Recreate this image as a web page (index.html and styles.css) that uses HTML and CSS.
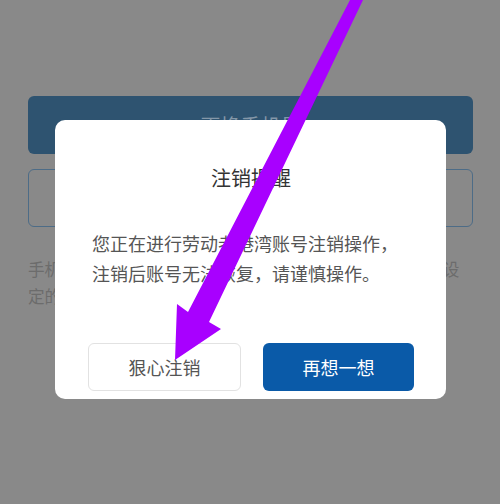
FILE: index.html
```html
<!DOCTYPE html>
<html lang="zh-CN">
<head>
  <meta charset="UTF-8">
  <meta name="viewport" content="width=device-width, initial-scale=1.0">
  <title>注销提醒</title>
  <link rel="stylesheet" href="styles.css">
</head>
<body>
  <div class="page">
    <button class="btn-primary">更换手机号</button>
    <button class="btn-outline">注销账号</button>
    <p class="tip">手机号更换后，原手机号将不能再用于登录，请确认您已设<br>定的新手机号可以正常接收验证码。</p>
  </div>

  <div class="mask">
    <div class="dialog">
      <h2 class="dialog-title">注销提醒</h2>
      <p class="dialog-text">您正在进行劳动者港湾账号注销操作，<br>注销后账号无法恢复，请谨慎操作。</p>
      <div class="dialog-actions">
        <button class="dlg-btn cancel">狠心注销</button>
        <button class="dlg-btn confirm">再想一想</button>
      </div>
    </div>
  </div>

  <svg class="arrow" width="500" height="504" viewBox="0 0 500 504">
    <polygon points="350,0 363,0 209,322 221,329 175,360 177,304 188,312" fill="#a800ff"/>
  </svg>
</body>
</html>
```

FILE: styles.css
```css
*{margin:0;padding:0;box-sizing:border-box;font-family:"Noto Sans CJK SC","Noto Sans",sans-serif;}
body{width:500px;height:504px;background:#898989;overflow:hidden;}
.page{padding:96px 27px 0 28px;display:flex;flex-direction:column;}
.btn-primary{height:58px;border:none;border-radius:6px;background:#2e5370;color:#8497a8;font-size:20px;}
.btn-outline{height:58px;margin-top:15px;border:1.5px solid #4d6c87;border-radius:6px;background:#898989;color:#4d6c87;font-size:18px;}
.tip{margin-top:29px;color:#6c6c6c;font-size:16.6px;line-height:27px;white-space:nowrap;}

.mask{position:fixed;inset:0;padding-top:120px;}
.dialog{width:391px;margin-left:55px;padding:44px 32px 8px 33px;background:#fff;border-radius:10px;}
.dialog-title{text-align:center;color:#333;font-size:20px;font-weight:normal;line-height:28px;}
.dialog-text{margin-top:36px;padding-left:4px;color:#555;font-size:18px;line-height:30px;}
.dialog-actions{display:flex;gap:22px;margin-top:55px;}
.dlg-btn{flex:1;height:48px;border-radius:6px;font-size:18px;}
.dlg-btn.cancel{background:#fff;border:1px solid #e2e2e2;color:#555;}
.dlg-btn.confirm{background:#0a5aa8;border:none;color:#fff;}

.arrow{position:fixed;left:0;top:0;pointer-events:none;}
```
